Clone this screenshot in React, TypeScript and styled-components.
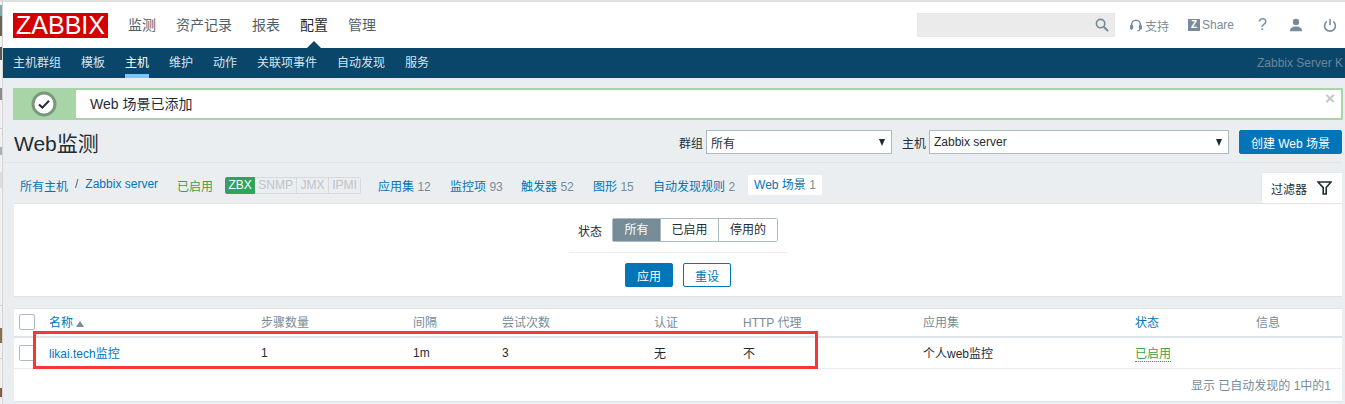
import React from "react";
import styled, { createGlobalStyle } from "styled-components";

const GlobalStyle = createGlobalStyle`
  html, body {
    margin: 0;
    padding: 0;
    background: #ebeef0;
    overflow: hidden;
  }
  * {
    box-sizing: border-box;
  }
  body {
    font-family: "Liberation Sans", "Noto Sans CJK SC", sans-serif;
    font-size: 12px;
    color: #1f2c33;
  }
`;

const Page = styled.div`
  position: relative;
  display: flex;
  width: 1345px;
  height: 404px;
  overflow: hidden;
  background: #ebeef0;
`;

// sliver of the window behind the browser
const Edge = styled.div`
  flex: 0 0 3px;
  height: 404px;
  background: linear-gradient(
    to bottom,
    #e0e0e0 0 2px,
    #f1f1f1 2px 5px,
    #7fa9a8 5px 16px,
    #6a6455 16px 36px,
    #f1f1f1 36px 47px,
    #55585c 47px 60px,
    #f1f1f1 60px 88px,
    #8a8a8a 88px 100px,
    #f1f1f1 100px 128px,
    #d0d0d0 128px 129px,
    #f1f1f1 129px 147px,
    #a9b0b6 147px 155px,
    #f1f1f1 155px 172px,
    #dedede 172px 188px,
    #f1f1f1 188px 305px,
    #d0d0d0 305px 306px,
    #f1f1f1 306px 328px,
    #8a6d4a 328px 343px,
    #f1f1f1 343px 358px,
    #d0d0d0 358px 359px,
    #f1f1f1 359px 388px,
    #8a5a48 388px 397px,
    #f1f1f1 397px 404px
  );
  border-right: 1px solid #d4d4d4;
`;

const Main = styled.div`
  flex: 1;
  min-width: 0;
  border-top: 2px solid #e0e0e0;
`;

const Header = styled.header`
  display: flex;
  align-items: center;
  height: 46px;
  padding: 0 8px 0 10px;
  background: #fff;
`;

const Logo = styled.div`
  width: 95px;
  height: 25px;
  margin-right: 20px;
  background: #d40000;
  color: #fff;
  font-size: 25px;
  line-height: 25px;
  text-align: center;
`;

const MainNav = styled.nav`
  display: flex;
  gap: 20px;
`;

const MainNavItem = styled.a<{ $active?: boolean }>`
  position: relative;
  font-size: 14px;
  line-height: 46px;
  color: ${(p) => (p.$active ? "#1f2c33" : "#4f5f68")};

  ${(p) =>
    p.$active &&
    `
    &::after {
      content: "";
      position: absolute;
      left: 50%;
      bottom: 0;
      margin-left: -7px;
      border: 7px solid transparent;
      border-top: 0;
      border-bottom-color: #0a466a;
    }
  `}
`;

const HeaderRight = styled.div`
  display: flex;
  align-items: center;
  margin-left: auto;
`;

const Search = styled.div`
  display: flex;
  align-items: center;
  justify-content: flex-end;
  width: 198px;
  height: 24px;
  padding-right: 5px;
  margin-right: 15px;
  background: #ebebeb;
  border: 1px solid #e8e8e8;
`;

const HeaderLink = styled.a<{ $width: number; $gap?: number }>`
  display: flex;
  align-items: center;
  width: ${(p) => p.$width}px;
  color: #768d99;
  font-size: 12px;
  gap: ${(p) => p.$gap ?? 2}px;
`;

const ZBadge = styled.span`
  display: inline-block;
  width: 12px;
  height: 12px;
  background: #768d99;
  color: #fff;
  font-size: 10px;
  font-weight: bold;
  line-height: 12px;
  text-align: center;
`;

const Question = styled.span`
  font-size: 16px;
  color: #768d99;
  line-height: 16px;
`;

const SubNav = styled.nav`
  display: flex;
  gap: 20px;
  height: 30px;
  padding: 0 2px 0 10px;
  background: #0a466a;
`;

const SubNavItem = styled.a<{ $active?: boolean }>`
  height: 30px;
  line-height: 30px;
  color: ${(p) => (p.$active ? "#fff" : "#d4e4ee")};
  font-size: 12px;
  border-bottom: ${(p) => (p.$active ? "4px solid #7fc5f5" : "0")};
`;

const ServerName = styled.span`
  margin-left: auto;
  white-space: nowrap;
  line-height: 30px;
  color: #6b8796;
`;

const Content = styled.div`
  padding: 10px 3px 0 10px;
`;

const Message = styled.div`
  position: relative;
  display: flex;
  align-items: center;
  width: 1330px;
  height: 32px;
  border: 2px solid #a8d5a8;
  border-left: 0;
  border-radius: 2px;
  background: #fff;
`;

const MessageIcon = styled.div`
  display: flex;
  align-items: center;
  justify-content: center;
  align-self: stretch;
  flex: 0 0 63px;
  margin: -2px 0;
  padding-right: 1px;
  background: #a8d5a8;
`;

const MessageText = styled.span`
  margin: -2px 0 0 14px;
  font-size: 14px;
  color: #1f2c33;
`;

const MessageClose = styled.span`
  position: absolute;
  right: 6px;
  top: 2px;
  color: #bcc6cc;
  font-size: 17px;
  font-weight: bold;
  line-height: 14px;
`;

const TitleRow = styled.div`
  display: flex;
  align-items: center;
  height: 42px;
  padding-left: 1px;
  padding-top: 2px;
  width: 1329px;
`;

const Title = styled.h1`
  margin: 0;
  font-size: 21px;
  font-weight: normal;
  color: #1f2c33;
`;

const Controls = styled.div`
  display: flex;
  align-items: center;
  margin-left: auto;
`;

const ControlLabel = styled.label`
  margin-right: 3px;
`;

const FakeSelect = styled.div<{ $width: number }>`
  display: flex;
  align-items: center;
  justify-content: space-between;
  width: ${(p) => p.$width}px;
  height: 24px;
  margin-right: 10px;
  padding: 0 6px 0 4px;
  background: #fff;
  border: 1px solid #acbbc2;
  color: #1f2c33;

  &::after {
    content: "";
    border: 3.5px solid transparent;
    border-top: 7px solid #1f2c33;
    border-bottom: 0;
  }
`;

const PrimaryButton = styled.button<{ $width: number }>`
  width: ${(p) => p.$width}px;
  height: 24px;
  padding: 0;
  border: 1px solid #0275b8;
  border-radius: 2px;
  background: #0275b8;
  color: #fff;
  font: inherit;
`;

const OutlineButton = styled(PrimaryButton)`
  background: #fff;
  color: #0275b8;
`;

const NavBar = styled.div`
  display: flex;
  align-items: center;
  position: relative;
  height: 41px;
  margin-left: -10px;
  padding: 5px 0 0 17px;
  border-top: 1px solid #dfe4e7;
  width: 1339px;
`;

const Crumbs = styled.div`
  display: flex;
  gap: 7px;
  margin-right: 19px;
  color: #0275b8;
`;

const Slash = styled.span`
  color: #4f5f68;
`;

const Enabled = styled.span<{ $dotted?: boolean }>`
  color: #429e47;
  ${(p) => p.$dotted && "border-bottom: 1px dotted #429e47;"}
`;

const Availability = styled.div`
  display: flex;
  height: 17px;
  margin: 0 17px 0 12px;
`;

const AvailabilityItem = styled.span<{ $on?: boolean; $width: number }>`
  width: ${(p) => p.$width}px;
  line-height: 15px;
  text-align: center;
  font-size: 12px;
  color: ${(p) => (p.$on ? "#fff" : "#bcc5ca")};
  background: ${(p) => (p.$on ? "#2da55d" : "#ebeef0")};
  border: 1px solid ${(p) => (p.$on ? "#2da55d" : "#d6dadd")};
  border-left-width: ${(p) => (p.$on ? "1px" : "0")};
  border-radius: ${(p) => (p.$on ? "2px 0 0 2px" : "0")};

  &:last-child {
    border-radius: 0 2px 2px 0;
  }
`;

const ObjectLinks = styled.div`
  display: flex;
  align-items: center;
`;

const ObjectLink = styled.span<{ $width: number; $current?: boolean }>`
  width: ${(p) => p.$width}px;
  color: #0275b8;
  white-space: nowrap;
  ${(p) =>
    p.$current &&
    `
    background: #fff;
    height: 20px;
    line-height: 20px;
    padding-left: 6px;
    border-radius: 2px;
    margin: -2px 0 0 -6px;
  `}

  em {
    font-style: normal;
    color: #768d99;
  }
`;

const FilterTab = styled.div`
  position: absolute;
  right: 0;
  bottom: 0;
  display: flex;
  align-items: center;
  gap: 10px;
  width: 81px;
  height: 31px;
  padding-left: 9px;
  background: #fff;
  border-left: 1px solid #e4e8ea;
  border-top: 1px solid #e4e8ea;
  color: #1f2c33;
`;

const FilterPanel = styled.section`
  display: flex;
  flex-direction: column;
  align-items: center;
  width: 1328px;
  height: 94px;
  margin-left: 1px;
  padding-top: 14px;
  background: #fff;
  border-top: 1px solid #dfe4e7;
  border-bottom: 1px solid #dfe4e7;
`;

const FilterRow = styled.div`
  display: flex;
  align-items: center;
  gap: 10px;
`;

const Segments = styled.div`
  display: flex;
  height: 24px;
  border: 1px solid #acbbc2;
  border-radius: 2px;
`;

const Segment = styled.span<{ $on?: boolean; $width: number }>`
  width: ${(p) => p.$width}px;
  line-height: 22px;
  text-align: center;
  background: ${(p) => (p.$on ? "#768d99" : "#fff")};
  color: ${(p) => (p.$on ? "#fff" : "#1f2c33")};
  border-right: 1px solid #acbbc2;

  &:last-child {
    border-right: 0;
  }
`;

const FilterDivider = styled.div`
  width: 219px;
  height: 1px;
  margin: 10px 0;
  background: #ebeef0;
`;

const FilterButtons = styled.div`
  display: flex;
  gap: 10px;
`;

const TablePanel = styled.section`
  width: 1328px;
  height: 94px;
  margin: 11px 0 0 1px;
  background: #fff;
  border-top: 1px solid #dfe4e7;
  border-bottom: 1px solid #dfe4e7;
`;

const Table = styled.table`
  width: 100%;
  table-layout: fixed;
  border-collapse: collapse;
`;

const Th = styled.th<{ $link?: boolean }>`
  height: 28px;
  padding: 0 0 2px;
  text-align: left;
  font-weight: normal;
  color: ${(p) => (p.$link ? "#0275b8" : "#768d99")};
  border-bottom: 2px solid #dfe4e7;
`;

const Td = styled.td`
  height: 31px;
  padding: 0;
  color: #1f2c33;
  border-bottom: 1px solid #ebeef0;
`;

const Check = styled.span`
  display: block;
  width: 16px;
  height: 16px;
  margin-left: 5px;
  background: #fff;
  border: 1px solid #acbbc2;
  border-radius: 2px;
`;

const NameLink = styled.a`
  color: #0275b8;
`;

const SortArrow = styled.span`
  display: inline-block;
  margin-left: 3px;
  border: 4px solid transparent;
  border-top: 0;
  border-bottom: 6px solid #768d99;
`;

const TableFooter = styled.div`
  height: 32px;
  padding-right: 11px;
  line-height: 35px;
  text-align: right;
  color: #768d99;
`;

const Annotation = styled.div`
  position: absolute;
  left: 33px;
  top: 331px;
  width: 785px;
  height: 38px;
  border: 3px solid #fa3535;
  pointer-events: none;
`;

const SearchIcon = () => (
  <svg width="14" height="14" viewBox="0 0 14 14" fill="none" stroke="#768d99" strokeWidth="1.6">
    <circle cx="5.6" cy="5.6" r="4.2" />
    <path d="M8.8 8.8 13 13" strokeWidth="2" />
  </svg>
);

const HeadsetIcon = () => (
  <svg width="12" height="13" viewBox="0 0 12 13" fill="none" stroke="#768d99" strokeWidth="1.5">
    <path d="M1.6 8V5.6a4.4 4.4 0 0 1 8.8 0V8" />
    <rect x="0.8" y="6.6" width="1.6" height="3.4" rx="0.7" fill="#768d99" />
    <rect x="9.6" y="6.6" width="1.6" height="3.4" rx="0.7" fill="#768d99" />
    <path d="M10 10c0 1.2-1 1.8-2.6 1.8" strokeWidth="1.2" />
  </svg>
);

const UserIcon = () => (
  <svg width="14" height="14" viewBox="0 0 14 14" fill="#768d99">
    <circle cx="7" cy="4" r="3.2" />
    <path d="M1 13.2c0-3 2.4-4.6 6-4.6s6 1.6 6 4.6z" />
  </svg>
);

const PowerIcon = () => (
  <svg width="14" height="14" viewBox="0 0 14 14" fill="none" stroke="#768d99" strokeWidth="1.6">
    <path d="M7 1v6" />
    <path d="M3.8 3.4a5.4 5.4 0 1 0 6.4 0" />
  </svg>
);

const SuccessIcon = () => (
  <svg width="26" height="26" viewBox="0 0 26 26">
    <circle cx="13" cy="13" r="11" fill="#fff" stroke="#7c987c" strokeWidth="3" />
    <path d="M8 13.4l3.4 3.2L18 9.8" fill="none" stroke="#1f2c33" strokeWidth="2" />
  </svg>
);

const FunnelIcon = () => (
  <svg width="15" height="14" viewBox="0 0 15 14" fill="none" stroke="#1f2c33" strokeWidth="1.6">
    <path d="M1 1h13L9.2 6.6V13H6.2V6.6z" />
  </svg>
);

const columns = [35, 212, 152, 89, 152, 89, 180, 212, 121, 86];

const headers = ["步骤数量", "间隔", "尝试次数", "认证", "HTTP 代理", "应用集"];

export default function App() {
  return (
    <Page>
      <GlobalStyle />
      <Edge />
      <Main>
        <Header>
          <Logo>ZABBIX</Logo>
          <MainNav>
            <MainNavItem>监测</MainNavItem>
            <MainNavItem>资产记录</MainNavItem>
            <MainNavItem>报表</MainNavItem>
            <MainNavItem $active>配置</MainNavItem>
            <MainNavItem>管理</MainNavItem>
          </MainNav>
          <HeaderRight>
            <Search>
              <SearchIcon />
            </Search>
            <HeaderLink $width={58} $gap={3}>
              <HeadsetIcon />
              支持
            </HeaderLink>
            <HeaderLink $width={70}>
              <ZBadge>Z</ZBadge>
              Share
            </HeaderLink>
            <HeaderLink $width={31}>
              <Question>?</Question>
            </HeaderLink>
            <HeaderLink $width={34}>
              <UserIcon />
            </HeaderLink>
            <HeaderLink $width={14}>
              <PowerIcon />
            </HeaderLink>
          </HeaderRight>
        </Header>
        <SubNav>
          <SubNavItem>主机群组</SubNavItem>
          <SubNavItem>模板</SubNavItem>
          <SubNavItem $active>主机</SubNavItem>
          <SubNavItem>维护</SubNavItem>
          <SubNavItem>动作</SubNavItem>
          <SubNavItem>关联项事件</SubNavItem>
          <SubNavItem>自动发现</SubNavItem>
          <SubNavItem>服务</SubNavItem>
          <ServerName>Zabbix Server K</ServerName>
        </SubNav>
        <Content>
          <Message>
            <MessageIcon>
              <SuccessIcon />
            </MessageIcon>
            <MessageText>Web 场景已添加</MessageText>
            <MessageClose>×</MessageClose>
          </Message>
          <TitleRow>
            <Title>Web监测</Title>
            <Controls>
              <ControlLabel>群组</ControlLabel>
              <FakeSelect $width={186}>所有</FakeSelect>
              <ControlLabel>主机</ControlLabel>
              <FakeSelect $width={300}>Zabbix server</FakeSelect>
              <PrimaryButton $width={103}>创建 Web 场景</PrimaryButton>
            </Controls>
          </TitleRow>
          <NavBar>
            <Crumbs>
              <span>所有主机</span>
              <Slash>/</Slash>
              <span>Zabbix server</span>
            </Crumbs>
            <Enabled>已启用</Enabled>
            <Availability>
              <AvailabilityItem $on $width={30}>ZBX</AvailabilityItem>
              <AvailabilityItem $width={42}>SNMP</AvailabilityItem>
              <AvailabilityItem $width={32}>JMX</AvailabilityItem>
              <AvailabilityItem $width={32}>IPMI</AvailabilityItem>
            </Availability>
            <ObjectLinks>
              <ObjectLink $width={72}>应用集 <em>12</em></ObjectLink>
              <ObjectLink $width={71}>监控项 <em>93</em></ObjectLink>
              <ObjectLink $width={72}>触发器 <em>52</em></ObjectLink>
              <ObjectLink $width={60}>图形 <em>15</em></ObjectLink>
              <ObjectLink $width={101}>自动发现规则 <em>2</em></ObjectLink>
              <ObjectLink $width={74} $current>Web 场景 <em>1</em></ObjectLink>
            </ObjectLinks>
            <FilterTab>
              过滤器
              <FunnelIcon />
            </FilterTab>
          </NavBar>
          <FilterPanel>
            <FilterRow>
              <span>状态</span>
              <Segments>
                <Segment $on $width={48}>所有</Segment>
                <Segment $width={58}>已启用</Segment>
                <Segment $width={58}>停用的</Segment>
              </Segments>
            </FilterRow>
            <FilterDivider />
            <FilterButtons>
              <PrimaryButton $width={48}>应用</PrimaryButton>
              <OutlineButton $width={48}>重设</OutlineButton>
            </FilterButtons>
          </FilterPanel>
          <TablePanel>
            <Table>
              <colgroup>
                {columns.map((w, i) => (
                  <col key={i} width={w} />
                ))}
              </colgroup>
              <thead>
                <tr>
                  <Th><Check /></Th>
                  <Th $link>名称<SortArrow /></Th>
                  {headers.map((h) => (
                    <Th key={h}>{h}</Th>
                  ))}
                  <Th $link>状态</Th>
                  <Th>信息</Th>
                </tr>
              </thead>
              <tbody>
                <tr>
                  <Td><Check /></Td>
                  <Td><NameLink>likai.tech监控</NameLink></Td>
                  <Td>1</Td>
                  <Td>1m</Td>
                  <Td>3</Td>
                  <Td>无</Td>
                  <Td>不</Td>
                  <Td>个人web监控</Td>
                  <Td><Enabled $dotted>已启用</Enabled></Td>
                  <Td />
                </tr>
              </tbody>
            </Table>
            <TableFooter>显示 已自动发现的 1中的1</TableFooter>
          </TablePanel>
        </Content>
      </Main>
      <Annotation />
    </Page>
  );
}
